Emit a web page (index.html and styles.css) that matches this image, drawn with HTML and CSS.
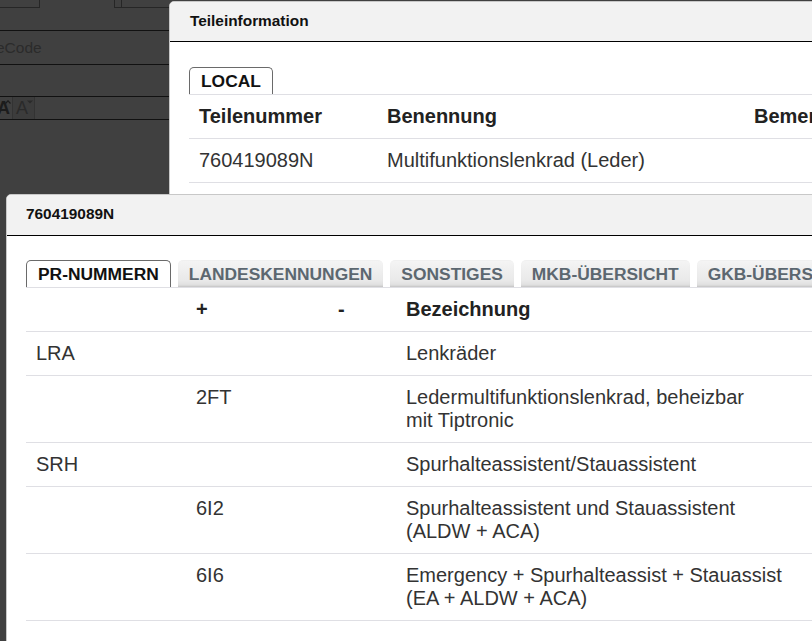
FILE: index.html
```html
<!DOCTYPE html>
<html lang="de">
<head>
<meta charset="utf-8">
<title>Teileinformation</title>
<link rel="stylesheet" href="styles.css">
</head>
<body>
  <div class="backdrop">
    <div class="bg-row bg-top">
      <div class="bg-box bg-box-a"></div>
      <div class="bg-box bg-box-b"><div class="bg-box-inner"></div></div>
    </div>
    <div class="bg-row bg-input"><span class="bg-label">eCode</span></div>
    <div class="bg-row bg-empty"></div>
    <div class="bg-row bg-fontbar">
      <span class="fs-btn fs-inc">A<svg class="caret" width="6" height="4" viewBox="0 0 6 4"><path d="M0.5 3.5 L3 0.8 L5.5 3.5" fill="none" stroke="currentColor" stroke-width="1.2"/></svg></span>
      <span class="fs-btn fs-dec">A<svg class="caret" width="6" height="4" viewBox="0 0 6 4"><path d="M0 0.5 L6 0.5 L3 3.5 Z" fill="currentColor"/></svg></span>
    </div>
  </div>

  <section class="dialog dialog-parts">
    <header class="dialog-head head-parts">Teileinformation</header>
    <div class="dialog-body body-parts">
      <nav class="tabs">
        <span class="tab tab-active">LOCAL</span>
      </nav>
      <table class="grid grid-parts">
        <colgroup><col class="c-nr"><col class="c-name"><col class="c-rest"></colgroup>
        <thead>
          <tr><th>Teilenummer</th><th>Benennung</th><th>Bemerkung</th></tr>
        </thead>
        <tbody>
          <tr><td>760419089N</td><td>Multifunktionslenkrad (Leder)</td><td></td></tr>
        </tbody>
      </table>
    </div>
  </section>

  <section class="dialog dialog-pr">
    <header class="dialog-head head-pr">760419089N</header>
    <div class="dialog-body body-pr">
      <nav class="tabs">
        <span class="tab tab-active">PR-NUMMERN</span>
        <span class="tab tab-idle">LANDESKENNUNGEN</span>
        <span class="tab tab-idle">SONSTIGES</span>
        <span class="tab tab-idle">MKB-ÜBERSICHT</span>
        <span class="tab tab-idle">GKB-ÜBERSICHT</span>
      </nav>
      <table class="grid grid-pr">
        <colgroup><col class="c-fam"><col class="c-plus"><col class="c-minus"><col class="c-desc"><col class="c-rest"></colgroup>
        <thead>
          <tr><th></th><th>+</th><th>-</th><th>Bezeichnung</th><th>Bemerkung</th></tr>
        </thead>
        <tbody>
          <tr><td>LRA</td><td></td><td></td><td>Lenkräder</td><td></td></tr>
          <tr><td></td><td>2FT</td><td></td><td>Ledermultifunktionslenkrad, beheizbar<br>mit Tiptronic</td><td></td></tr>
          <tr><td>SRH</td><td></td><td></td><td>Spurhalteassistent/Stauassistent</td><td></td></tr>
          <tr><td></td><td>6I2</td><td></td><td>Spurhalteassistent und Stauassistent<br>(ALDW + ACA)</td><td></td></tr>
          <tr><td></td><td>6I6</td><td></td><td>Emergency + Spurhalteassist + Stauassist<br>(EA + ALDW + ACA)</td><td></td></tr>
        </tbody>
      </table>
    </div>
  </section>
</body>
</html>
```

FILE: styles.css
```css
* { box-sizing: border-box; }

html, body {
  margin: 0;
  padding: 0;
}

body {
  width: 812px;
  height: 641px;
  overflow: hidden;
  position: relative;
  background: #404040;
  font-family: "Liberation Sans", Arial, sans-serif;
  color: #333;
}

/* dimmed page behind the dialogs */
.backdrop {
  width: 812px;
}

.bg-row {
  border-bottom: 1px solid #111;
}

.bg-top {
  height: 31px;
  display: flex;
  align-items: flex-start;
}

.bg-box {
  height: 8px;
  border-bottom: 1px solid #262626;
}

.bg-box-a {
  width: 40px;
  border-right: 1px solid #262626;
}

.bg-box-b {
  margin-left: 74px;
  width: 80px;
  border-left: 1px solid #262626;
  padding-left: 6px;
}

.bg-box-inner {
  height: 7px;
  border-left: 1px solid #262626;
}

.bg-input {
  height: 34px;
  display: flex;
  align-items: center;
}

.bg-label {
  margin-left: -4px;
  font-size: 15.5px;
  color: #2b2b2b;
}

.bg-empty {
  height: 32px;
}

.bg-fontbar {
  height: 23px;
  display: flex;
  align-items: stretch;
}

.fs-btn {
  position: relative;
  display: flex;
  align-items: center;
  font-size: 18px;
  line-height: 1;
}

.fs-inc {
  margin-left: -3px;
  width: 16px;
  font-weight: bold;
  color: #1c1c1c;
  border-right: 1px solid #333;
}

.fs-dec {
  width: 22px;
  padding-left: 3px;
  color: #2a2a2a;
  background: #3c3c3c;
  border-right: 1px solid #333;
}

.caret {
  position: absolute;
  top: 3px;
  right: 1px;
}

/* dialogs */
.dialog {
  position: absolute;
  background: #fff;
  border: 1px solid #c8c8c8;
  border-radius: 5px 5px 0 0;
  overflow: hidden;
}

.dialog-parts {
  left: 169px;
  top: 1px;
  width: 760px;
  height: 260px;
}

.dialog-pr {
  left: 6px;
  top: 194px;
  width: 900px;
  height: 520px;
}

.dialog-head {
  background: #f2f2f2;
  border-bottom: 1px solid #000;
  font-weight: bold;
  font-size: 15.4px;
  line-height: 17px;
  color: #111;
  padding: 10px 20px 12px;
}

.head-pr {
  padding: 10px 19px 13px;
}

.body-parts {
  padding: 25px 0 0 19px;
}

.body-pr {
  padding: 24px 0 0 19px;
}

.tabs {
  display: flex;
  gap: 7px;
  align-items: flex-end;
}

.tab {
  font-weight: bold;
  font-size: 17.4px;
  line-height: 20px;
  padding: 3px 11px;
  border-radius: 5px 5px 0 0;
  white-space: nowrap;
}

.tab-active {
  background: #fff;
  color: #111;
  border: 1px solid #6a6a6a;
  border-bottom: none;
}

.tab-idle {
  color: #5c6770;
  border-top: 1px solid #f0f0f0;
  background: linear-gradient(#f4f4f4, #e9e9e9 75%, #dcdcdc);
  box-shadow: inset 0 -2px 2px -1px rgba(0, 0, 0, 0.12);
}

.grid {
  border-collapse: collapse;
  table-layout: fixed;
  border-top: 1px solid #dfdfe4;
  font-size: 20px;
  line-height: 23px;
}

.grid th,
.grid td {
  padding: 10px;
  text-align: left;
  vertical-align: top;
  border-bottom: 1px solid #dfdfe4;
  white-space: nowrap;
}

.grid th {
  font-weight: bold;
  color: #222;
}

.grid td {
  color: #333;
}

.grid-parts { width: 760px; }
.grid-parts .c-nr { width: 188px; }
.grid-parts .c-name { width: 367px; }
.grid-parts .c-rest { width: 205px; }

.grid-pr { width: 1000px; }
.grid-pr .c-fam { width: 160px; }
.grid-pr .c-plus { width: 142px; }
.grid-pr .c-minus { width: 68px; }
.grid-pr .c-desc { width: 430px; }
.grid-pr .c-rest { width: 200px; }
```
